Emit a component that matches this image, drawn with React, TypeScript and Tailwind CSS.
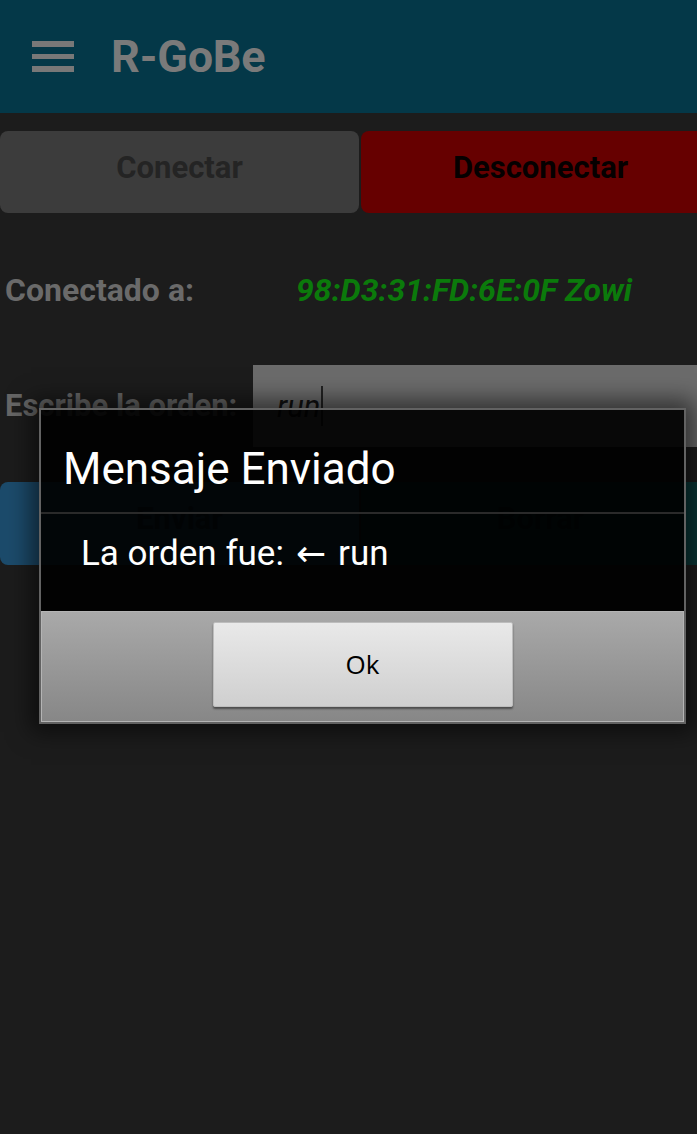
import React from "react";

export default function App() {
  const roboto = { fontFamily: "Roboto, 'Liberation Sans', sans-serif" };
  return (
    <div className="relative min-h-[1134px] w-[697px] overflow-hidden bg-[#1c1c1c]" style={roboto}>
      {/* Header */}
      <div className="flex h-[113px] items-center bg-[#043848]">
        <div className="ml-[32px] flex w-[42px] flex-col gap-[7px]">
          <div className="h-[5.5px] bg-[#787878]" />
          <div className="h-[5.5px] bg-[#787878]" />
          <div className="h-[5.5px] bg-[#787878]" />
        </div>
        <div className="ml-[37px] text-[45px] font-bold leading-none tracking-[-0.2px] text-[#7a7a7a]">R-GoBe</div>
      </div>

      {/* Connect buttons */}
      <div className="mt-[18px] flex gap-[2px]">
        <div className="flex h-[82px] w-[359px] shrink-0 items-center justify-center rounded-[8px] bg-[#3c3c3c] pb-[8px] text-[31px] font-bold text-[#242424]">
          Conectar
        </div>
        <div className="flex h-[82px] w-[359px] shrink-0 items-center justify-center rounded-[8px] bg-[#660000] pb-[8px] text-[31px] font-bold text-[#050000]">
          Desconectar
        </div>
      </div>

      {/* Connected to */}
      <div className="flex h-[152px] items-start pt-[59px]">
        <div className="w-[296px] pl-[5px] text-[32px] font-bold leading-[36px] text-[#6a6a6a]">Conectado a:</div>
        <div className="text-[32px] font-bold italic leading-[36px] text-[#0b7a0b]">98:D3:31:FD:6E:0F Zowi</div>
      </div>

      {/* Input row */}
      <div className="flex h-[82px] items-center">
        <div className="w-[253px] pl-[5px] text-[31px] font-bold leading-[36px] text-[#666666]">Escribe la orden:</div>
        <div className="flex h-[82px] flex-1 items-center bg-[#6b6b6b] pl-[24px]">
          <span className="text-[31px] italic leading-none text-[#111]">run</span>
          <span className="ml-[1px] h-[40px] w-[1.5px] bg-[#222]" />
        </div>
      </div>

      {/* Send buttons */}
      <div className="mt-[35px] flex gap-[2px]">
        <div className="flex h-[83px] w-[359px] shrink-0 items-center justify-center rounded-[8px] bg-[#1c4b6b] pb-[8px] text-[31px] font-bold text-[#10283a]">
          Enviar
        </div>
        <div className="flex h-[83px] w-[359px] shrink-0 items-center justify-center rounded-[8px] bg-[#0b3838] pb-[8px] text-[31px] font-bold text-[#081e1e]">
          Borrar
        </div>
      </div>

      {/* Dialog */}
      <div className="absolute left-[39px] top-[408px] flex h-[316px] w-[647px] flex-col border-2 border-[#626262] shadow-[0_0_22px_8px_rgba(0,0,0,0.55)]">
        <div className="flex flex-col bg-black/[0.92]">
          <div className="flex h-[104px] items-center border-b-2 border-[#2a2a2a] pl-[22px] pt-[16px] text-[44px] leading-none text-white">
            Mensaje Enviado
          </div>
          <div className="flex h-[97px] items-start pl-[40px] pt-[20px] text-[35px] leading-[40px] text-white">
            <span>La orden fue:</span>
            <span className="ml-[12px] mr-[12px] text-[36px]" style={{ fontFamily: "'DejaVu Sans', sans-serif" }}>←</span>
            <span>run</span>
          </div>
        </div>
        <div className="flex flex-1 items-start justify-center border border-[#b4b4b4] bg-gradient-to-b from-[#a9a9a9] to-[#878787] pt-[10px]">
          <div
            className="flex h-[85px] w-[300px] items-center justify-center rounded-[2px] border border-[#bdbdbd] bg-gradient-to-b from-[#e9e9e9] to-[#cfcfcf] text-[26px] text-black shadow-[0_2px_2px_rgba(0,0,0,0.45)]"
            style={{ fontFamily: "'Open Sans', Roboto, sans-serif" }}
          >
            Ok
          </div>
        </div>
      </div>
    </div>
  );
}
